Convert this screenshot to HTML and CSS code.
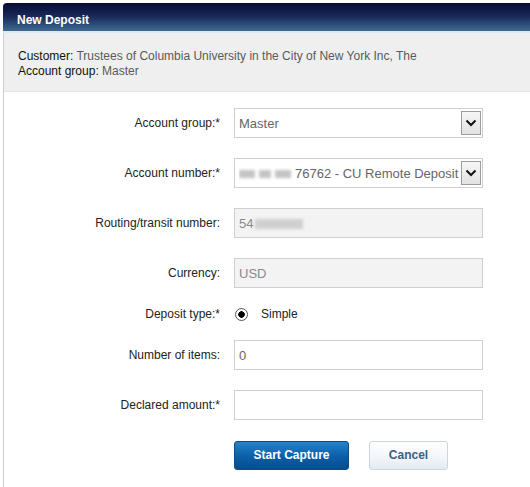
FILE: index.html
```html
<!DOCTYPE html>
<html lang="en">
<head>
<meta charset="UTF-8">
<meta name="viewport" content="width=device-width, initial-scale=1.0">
<title>New Deposit</title>
<link rel="stylesheet" href="styles.css">
</head>
<body>
<div class="panel">
    <div class="panel-header">New Deposit</div>
    <div class="summary">
        <div><span class="key">Customer:</span> Trustees of Columbia University in the City of New York Inc, The</div>
        <div><span class="key">Account group:</span> Master</div>
    </div>
    <form class="deposit-form">
        <label class="label">Account group:*</label>
        <div class="field select">
            <span class="value">Master</span>
            <span class="arrow"><svg width="12" height="8" viewBox="0 0 12 8"><path d="M1.5 1.5 L6 6 L10.5 1.5" fill="none" stroke="#111" stroke-width="2"/></svg></span>
        </div>

        <label class="label">Account number:*</label>
        <div class="field select">
            <span class="value"><span class="blur"></span><span class="blur short"></span><span class="blur"></span>76762 - CU Remote Deposit</span>
            <span class="arrow"><svg width="12" height="8" viewBox="0 0 12 8"><path d="M1.5 1.5 L6 6 L10.5 1.5" fill="none" stroke="#111" stroke-width="2"/></svg></span>
        </div>

        <label class="label">Routing/transit number:</label>
        <div class="field readonly"><span class="value">54<span class="blur wide"></span></span></div>

        <label class="label">Currency:</label>
        <div class="field readonly"><span class="value">USD</span></div>

        <label class="label">Deposit type:*</label>
        <div class="radio-row">
            <span class="radio"></span>
            <span>Simple</span>
        </div>

        <label class="label">Number of items:</label>
        <input class="field" type="text" value="0">

        <label class="label">Declared amount:*</label>
        <input class="field" type="text" value="">

        <span></span>
        <div class="actions">
            <button type="button" class="btn-primary">Start Capture</button>
            <button type="button" class="btn-secondary">Cancel</button>
        </div>
    </form>
</div>
</body>
</html>
```
FILE: styles.css
```css
* {
    box-sizing: border-box;
    margin: 0;
    padding: 0;
}

body {
    background: #ffffff;
    font-family: 'Liberation Sans', Arial, sans-serif;
    font-size: 12px;
    color: #222;
    padding: 3px 0 0 3px;
    height: 487px;
    overflow: hidden;
}

.panel {
    border-left: 1px solid #cfcfcf;
    border-top-left-radius: 4px;
    min-height: 500px;
    width: 540px;
}

.panel-header {
    height: 30px;
    padding: 10px 0 0 14px;
    font-weight: bold;
    color: #fff;
    background: linear-gradient(to bottom, #060a34 0%, #1a2b5c 50%, #3f6c93 100%);
    border-top-left-radius: 4px;
    margin-left: -1px;
    border-bottom: 2px solid #dbe8f4;
}

.summary {
    background: #efefef;
    height: 59px;
    padding: 16px 0 0 14px;
    line-height: 15px;
    color: #5a5a5a;
    border-bottom: 1px solid #e6e6e6;
}

.summary .key {
    color: #111;
}

.deposit-form {
    display: grid;
    grid-template-columns: 216px 249px;
    grid-template-rows: 30px 30px 30px 30px 12px 30px 30px 30px;
    column-gap: 14px;
    row-gap: 20px;
    padding-top: 16px;
    align-items: center;
}

.label {
    text-align: right;
    color: #222;
}

.field {
    height: 30px;
    border: 1px solid #cfcfcf;
    background: #fff;
    font-family: 'Liberation Sans', Arial, sans-serif;
    font-size: 13px;
    color: #666;
    padding: 0 4px;
    display: flex;
    align-items: center;
    outline: none;
}

.field .value {
    white-space: nowrap;
    overflow: hidden;
    flex: 1;
}

.select {
    padding-right: 1px;
}

.readonly {
    background: #f3f3f3;
    color: #8a8a8a;
}

.arrow {
    width: 20px;
    height: 24px;
    border: 1px solid #9c9c9c;
    background: linear-gradient(to bottom, #f6f6f6, #e2e2e2);
    display: flex;
    align-items: center;
    justify-content: center;
    flex-shrink: 0;
}

.blur {
    display: inline-block;
    width: 16px;
    height: 8px;
    margin-right: 4px;
    background: #c4c4c4;
    filter: blur(1.5px);
    vertical-align: middle;
}

.blur.short {
    width: 12px;
}

.blur.wide {
    width: 48px;
    height: 10px;
    margin-left: 2px;
    background: #d0d0d0;
}

.radio-row {
    display: flex;
    align-items: center;
    gap: 13px;
    padding-left: 1px;
    color: #222;
}

.radio {
    width: 13px;
    height: 13px;
    border: 1px solid #555;
    border-radius: 50%;
    background: radial-gradient(circle, #000 0 3px, #fff 3.5px);
}

.actions {
    display: flex;
    gap: 20px;
    align-items: center;
}

.btn-primary {
    width: 115px;
    height: 29px;
    border: 1px solid #0a4c86;
    border-radius: 3px;
    background: linear-gradient(to bottom, #2683c8 0%, #0b5ea8 55%, #0a4c8a 100%);
    color: #fff;
    font-family: 'Liberation Sans', Arial, sans-serif;
    font-size: 12px;
    font-weight: bold;
}

.btn-secondary {
    width: 79px;
    height: 29px;
    border: 1px solid #cdd6e0;
    border-radius: 3px;
    background: linear-gradient(to bottom, #ffffff 0%, #f3f6fa 55%, #e4ebf3 100%);
    color: #3e5f86;
    font-family: 'Liberation Sans', Arial, sans-serif;
    font-size: 12px;
    font-weight: bold;
}
```
